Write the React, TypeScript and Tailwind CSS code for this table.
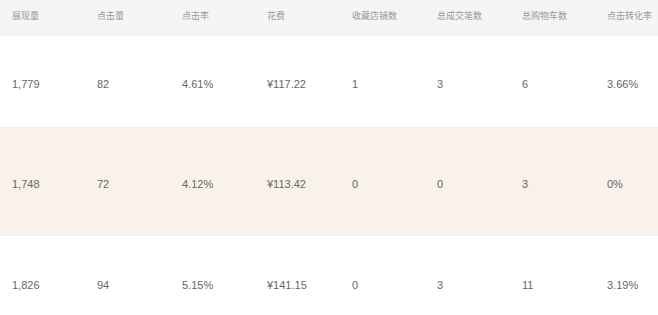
const headers = ["展现量", "点击量", "点击率", "花费", "收藏店铺数", "总成交笔数", "总购物车数", "点击转化率"];

const rows = [
  { cells: ["1,779", "82", "4.61%", "¥117.22", "1", "3", "6", "3.66%"], height: "h-[92px]", bg: "bg-white" },
  { cells: ["1,748", "72", "4.12%", "¥113.42", "0", "0", "3", "0%"], height: "h-[108px]", bg: "bg-[#f9f2eb]" },
  { cells: ["1,826", "94", "5.15%", "¥141.15", "0", "3", "11", "3.19%"], height: "h-[94px]", bg: "bg-white" },
];

export default function App() {
  return (
    <div className="w-[658px] h-[315px] overflow-hidden bg-white font-['Liberation_Sans','Noto_Sans_CJK_SC',sans-serif] text-[11px]">
      <div className="grid grid-cols-[repeat(8,85px)] h-[36px] bg-[#f5f5f5] text-[9px] text-[#999]">
        {headers.map((h) => (
          <div key={h} className="flex items-center pl-3 pb-[2px]">
            {h}
          </div>
        ))}
      </div>
      {rows.map((r, i) => (
        <div
          key={i}
          className={`grid grid-cols-[repeat(8,85px)] ${r.height} ${r.bg} border-b border-[#f1ece7] text-[#666]`}
        >
          {r.cells.map((c, j) => (
            <div key={j} className="flex items-center pl-3 pt-[5px]">
              {c}
            </div>
          ))}
        </div>
      ))}
    </div>
  );
}
